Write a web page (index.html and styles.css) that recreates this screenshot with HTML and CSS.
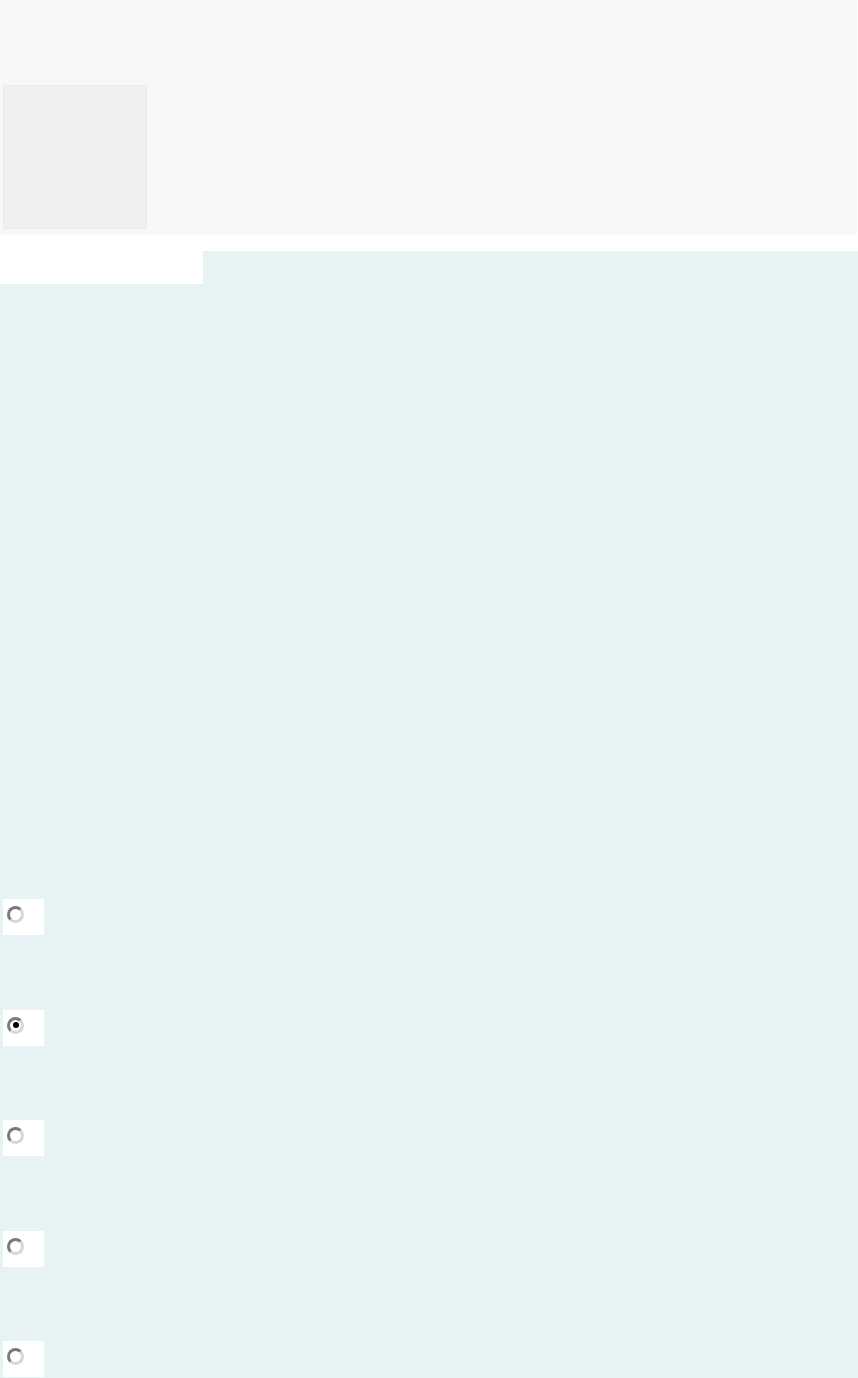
FILE: index.html
```html
<!DOCTYPE html>
<html lang="en">
<head>
<meta charset="utf-8">
<title>Page</title>
<link rel="stylesheet" href="styles.css">
</head>
<body>
<header class="header">
  <div class="logo-box"></div>
</header>
<main class="main">
  <div class="tabs">
    <div class="tab-active"></div>
  </div>
  <form class="options">
    <label class="option"><input class="radio" type="radio" name="opt"></label>
    <label class="option"><input class="radio" type="radio" name="opt" checked></label>
    <label class="option"><input class="radio" type="radio" name="opt"></label>
    <label class="option"><input class="radio" type="radio" name="opt"></label>
    <label class="option"><input class="radio" type="radio" name="opt"></label>
  </form>
</main>
</body>
</html>
```
FILE: styles.css
```css
html, body {
  margin: 0;
  padding: 0;
  background: #ffffff;
  font-family: "Liberation Sans", Arial, sans-serif;
}

.header {
  width: 857px;
  height: 235px;
  box-sizing: border-box;
  padding: 85px 0 0 3px;
  background: #f7f8fa;
}

.logo-box {
  width: 144px;
  height: 144px;
  box-sizing: border-box;
  background: #f0f0f0;
  border: 1px solid #ececec;
}

.main {
  margin-top: 16px;
  width: 858px;
  height: 1127px;
  background: #e6f2f4;
  display: flex;
  flex-direction: column;
}

.tabs {
  height: 33px;
  display: flex;
}

.tab-active {
  width: 203px;
  height: 33px;
  background: #ffffff;
}

.options {
  margin: 0;
  padding: 615px 0 0 3px;
  display: flex;
  flex-direction: column;
  gap: 74.5px;
}

.option {
  display: block;
  width: 41px;
  height: 36px;
  box-sizing: border-box;
  padding: 7px 0 0 4px;
  background: #ffffff;
}

.radio {
  appearance: none;
  -webkit-appearance: none;
  display: block;
  margin: 0;
  width: 17px;
  height: 17px;
  box-sizing: border-box;
  border-radius: 50%;
  border: 3px solid;
  border-color: #7a7a7a #d6d6d6 #d6d6d6 #7a7a7a;
  background: #ffffff;
  position: relative;
}

.radio:checked::after {
  content: "";
  position: absolute;
  left: 2.5px;
  top: 2.5px;
  width: 6px;
  height: 6px;
  border-radius: 50%;
  background: #000000;
}
```
